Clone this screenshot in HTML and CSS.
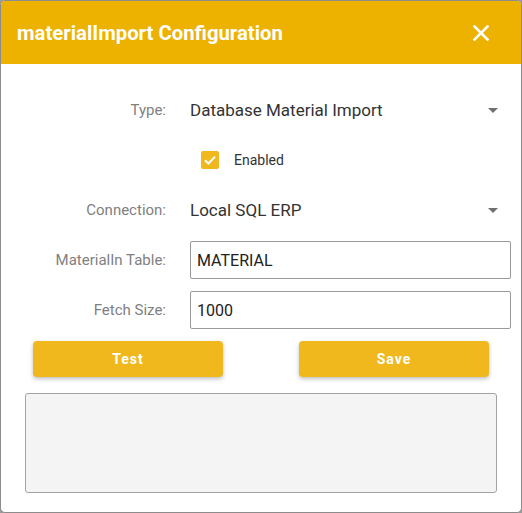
FILE: index.html
```html
<!DOCTYPE html>
<html>
<head>
<meta charset="utf-8">
<link rel="stylesheet" href="styles.css">
</head>
<body>
<div class="dialog">
  <div class="header">
    <span class="title">materialImport Configuration</span>
    <svg class="close" width="16" height="16" viewBox="0 0 16 16"><path d="M1.5 1.5 L14.5 14.5 M14.5 1.5 L1.5 14.5" stroke="#fff" stroke-width="2.6" stroke-linecap="square"/></svg>
  </div>
  <div class="body">
    <div class="form">
      <label class="lbl">Type:</label>
      <div class="select"><span>Database Material Import</span><span class="arrow"></span></div>

      <div></div>
      <div class="check-row"><span class="checkbox"><svg width="18" height="18" viewBox="0 0 18 18"><path d="M4 9.2 L7.4 12.5 L14 5.6" fill="none" stroke="#fff" stroke-width="2"/></svg></span><span class="check-label">Enabled</span></div>

      <label class="lbl">Connection:</label>
      <div class="select"><span>Local SQL ERP</span><span class="arrow"></span></div>

      <label class="lbl">MaterialIn Table:</label>
      <div class="input">MATERIAL</div>

      <label class="lbl">Fetch Size:</label>
      <div class="input">1000</div>
    </div>
    <div class="buttons">
      <button class="btn">Test</button>
      <button class="btn">Save</button>
    </div>
    <div class="output"></div>
  </div>
</div>
</body>
</html>
```

FILE: styles.css
```css
html, body {
  margin: 0;
  padding: 0;
  background: #9a9a9a;
  font-family: Roboto, "Liberation Sans", sans-serif;
}
.dialog {
  width: 520px;
  height: 511px;
  border: 1px solid #8c8c8c;
  border-radius: 5px;
  overflow: hidden;
  background: #fff;
  display: flex;
  flex-direction: column;
}
.header {
  height: 63px;
  background: #edb100;
  display: flex;
  align-items: center;
  justify-content: space-between;
  padding: 0 32px 0 16px;
  flex-shrink: 0;
}
.title {
  color: #fff;
  font-weight: 700;
  font-size: 20.3px;
  margin-top: 1px;
}
.close {
  display: block;
}
.body {
  padding-top: 27px;
  display: flex;
  flex-direction: column;
}
.form {
  display: grid;
  grid-template-columns: 165px 1fr;
  grid-auto-rows: 38px;
  column-gap: 24px;
  row-gap: 12px;
  padding-right: 10px;
}
.lbl {
  text-align: right;
  align-self: center;
  font-size: 15px;
  color: #7f7f7f;
  margin-top: -1px;
}
.select {
  display: flex;
  align-items: center;
  justify-content: space-between;
  font-size: 17px;
  color: #333;
  padding-right: 13px;
}
.arrow {
  width: 0;
  height: 0;
  border-left: 5px solid transparent;
  border-right: 5px solid transparent;
  border-top: 5px solid #707070;
}
.check-row {
  display: flex;
  align-items: center;
  padding-left: 11px;
}
.checkbox {
  width: 18px;
  height: 18px;
  background: #f0b81c;
  border-radius: 2px;
  display: flex;
}
.check-label {
  margin-left: 15px;
  font-size: 14px;
  color: #333;
}
.input {
  border: 1px solid #9a9a9a;
  border-radius: 2px;
  padding: 0 6px;
  display: flex;
  align-items: center;
  font-size: 16px;
  color: #222;
}
.buttons {
  display: flex;
  justify-content: space-between;
  padding: 0 32px;
  margin-top: 12px;
}
.btn {
  width: 190px;
  height: 36px;
  background: #f0b81c;
  border: none;
  border-radius: 4px;
  color: #fff;
  font-family: Roboto, "Liberation Sans", sans-serif;
  font-weight: 700;
  font-size: 14px;
  letter-spacing: 1px;
  box-shadow: 0 2px 4px rgba(0,0,0,0.25);
}
.output {
  margin: 16px 24px 0;
  height: 98px;
  background: #f4f4f4;
  border: 1px solid #a3a3a3;
  border-radius: 3px;
}
```
